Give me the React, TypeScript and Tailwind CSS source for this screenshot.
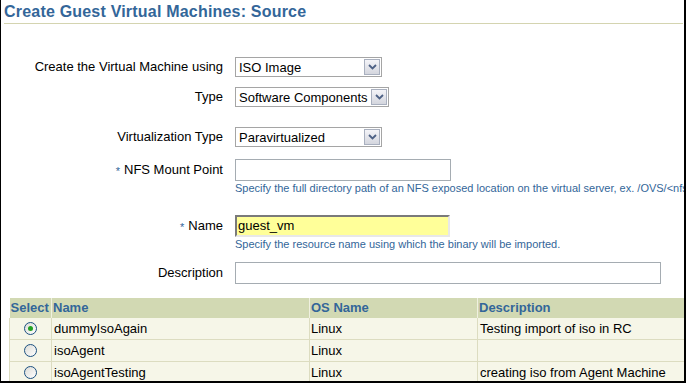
import React from 'react';

// Windows-classic looking select box
const FakeSelect: React.FC<{ value: string; width: string }> = ({ value, width }) => (
  <div className={`${width} h-[20px] border border-[#a5a5a5] bg-white flex items-center justify-between pl-[3px] pr-[1px]`}>
    <span className="text-[13px] text-black leading-none whitespace-nowrap">{value}</span>
    <div className="w-[16px] h-[16px] border border-[#a9b0bf] bg-gradient-to-b from-[#f4f4f8] to-[#d4d6de] flex items-center justify-center shrink-0">
      <svg width="9" height="6" viewBox="0 0 9 6">
        <polyline points="1 1 4.5 4.5 8 1" fill="none" stroke="#4d6185" strokeWidth="1.8" />
      </svg>
    </div>
  </div>
);

const Req = () => <span className="text-[#336699] text-[11px] mr-[4px] align-middle">*</span>;

const Radio: React.FC<{ checked?: boolean }> = ({ checked }) => (
  <div className="w-[13px] h-[13px] rounded-full border border-[#1c5180] bg-gradient-to-br from-[#dcdcd7] to-white flex items-center justify-center">
    {checked && <div className="w-[5px] h-[5px] rounded-full bg-[#21a121]" />}
  </div>
);

const rows = [
  { name: 'dummyIsoAgain', os: 'Linux', desc: 'Testing import of iso in RC', checked: true },
  { name: 'isoAgent', os: 'Linux', desc: '' },
  { name: 'isoAgentTesting', os: 'Linux', desc: 'creating iso from Agent Machine' },
];

export default function App() {
  return (
    <div className="w-[686px] h-[383px] overflow-hidden bg-white border-l border-r-2 border-b-2 border-black font-['Liberation_Sans',Arial,sans-serif] text-[13px] text-black">
      {/* header */}
      <div className="pl-[3px] pr-[1px]">
        <h1 className="text-[16px] font-bold text-[#336699] leading-[23px] tracking-[0.2px]">
          Create Guest Virtual Machines: Source
        </h1>
        <div className="h-px bg-[#d4d4b0]" />
      </div>

      <div className="flex flex-col mt-[33px]">
        <div className="flex items-center gap-[12px] h-[20px]">
          <div className="w-[222px] shrink-0 text-right">Create the Virtual Machine using</div>
          <FakeSelect value="ISO Image" width="w-[147px]" />
        </div>
        <div className="flex items-center gap-[12px] h-[20px] mt-[10px]">
          <div className="w-[222px] shrink-0 text-right">Type</div>
          <FakeSelect value="Software Components" width="w-[154px]" />
        </div>
        <div className="flex items-center gap-[12px] h-[20px] mt-[20px]">
          <div className="w-[222px] shrink-0 text-right">Virtualization Type</div>
          <FakeSelect value="Paravirtualized" width="w-[147px]" />
        </div>

        <div className="flex items-start gap-[12px] mt-[12px]">
          <div className="w-[222px] shrink-0 text-right leading-[22px]"><Req />NFS Mount Point</div>
          <div className="flex flex-col">
            <div className="w-[216px] h-[22px] border border-[#a5acb2] bg-white" />
            <div className="text-[11px] text-[#336699] leading-[13px] mt-[1px] whitespace-nowrap">
              Specify the full directory path of an NFS exposed location on the virtual server, ex. /OVS/&lt;nfs
            </div>
          </div>
        </div>

        <div className="flex items-start gap-[12px] mt-[20px]">
          <div className="w-[222px] shrink-0 text-right leading-[22px]"><Req />Name</div>
          <div className="flex flex-col">
            <div className="w-[215px] h-[22px] border-2 border-t-[#7a7a7a] border-l-[#7a7a7a] border-r-[#e8e8e8] border-b-[#e8e8e8] bg-[#ffff99] flex items-center pl-[1px] text-[13px]">
              guest_vm
            </div>
            <div className="text-[11px] text-[#336699] leading-[13px] mt-[1px] whitespace-nowrap">
              Specify the resource name using which the binary will be imported.
            </div>
          </div>
        </div>

        <div className="flex items-center gap-[12px] mt-[11px]">
          <div className="w-[222px] shrink-0 text-right">Description</div>
          <div className="w-[426px] h-[22px] border border-[#a5acb2] bg-white" />
        </div>
      </div>

      {/* table */}
      <div className="ml-[8px] mt-[14px]">
        <table className="border-collapse w-[690px] text-[13px]">
          <thead>
            <tr className="bg-[#d2d9b3] h-[19px]">
              <th className="w-[42px] text-left font-bold text-[#336699] pl-[1px] border-r border-[#f0f0e0]">Select</th>
              <th className="w-[258px] text-left font-bold text-[#336699] pl-[1px] border-r border-[#f0f0e0]">Name</th>
              <th className="w-[168px] text-left font-bold text-[#336699] pl-[1px] border-r border-[#f0f0e0]">OS Name</th>
              <th className="text-left font-bold text-[#336699] pl-[1px]">Description</th>
            </tr>
          </thead>
          <tbody>
            {rows.map((r) => (
              <tr key={r.name} className="bg-[#f6f6e8] h-[22px] border-b border-[#dcdcc0]">
                <td className="border-l border-r border-[#dcdcc0]">
                  <div className="flex justify-center"><Radio checked={r.checked} /></div>
                </td>
                <td className="pl-[2px] border-r border-[#dcdcc0]">{r.name}</td>
                <td className="pl-[1px] border-r border-[#dcdcc0]">{r.os}</td>
                <td className="pl-[2px]">{r.desc}</td>
              </tr>
            ))}
          </tbody>
        </table>
      </div>
    </div>
  );
}
